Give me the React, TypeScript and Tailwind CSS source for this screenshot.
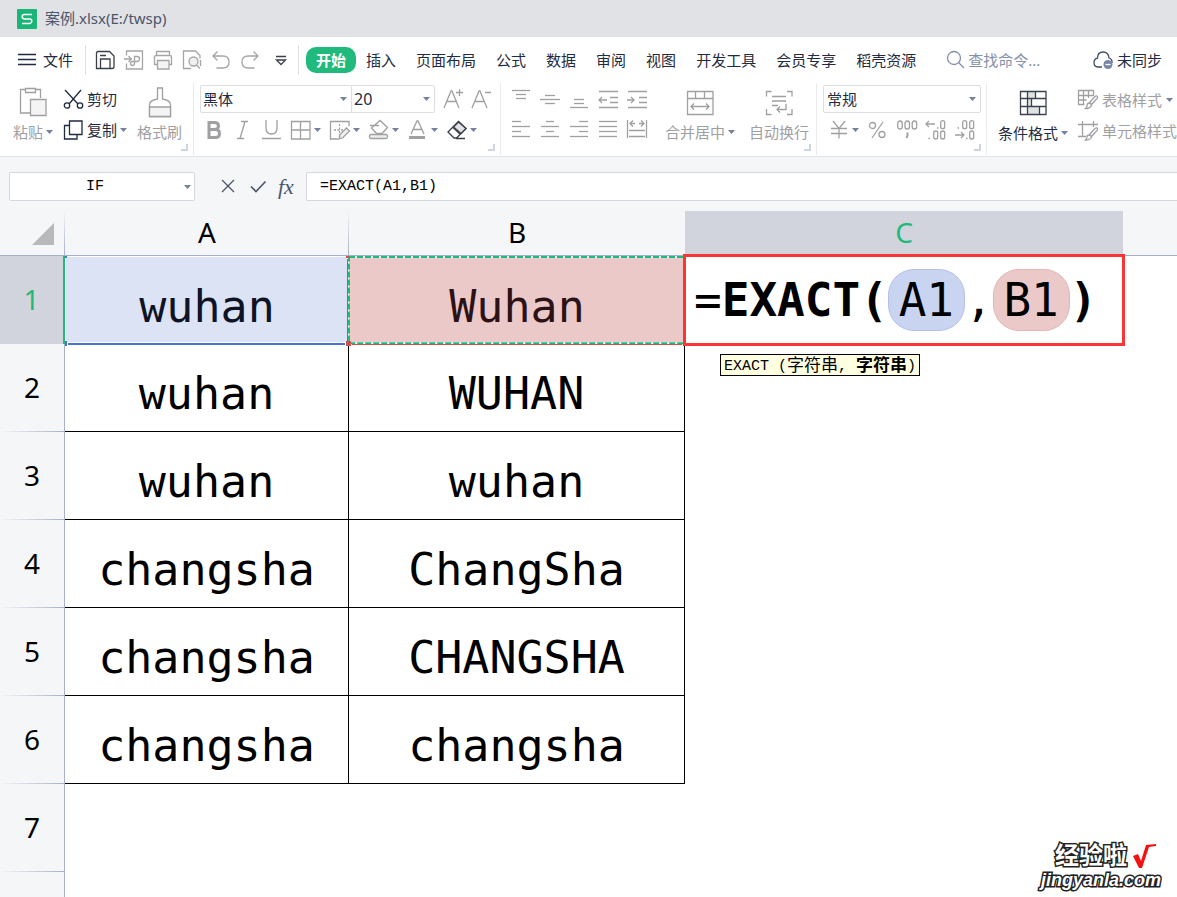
import React from "react";
import clsx from "clsx";

type IconProps = {
  w?: number;
  h?: number;
  className?: string;
  children: React.ReactNode;
};

const Icon = ({ w = 20, h = 20, className, children }: IconProps) => (
  <svg
    width={w}
    height={h}
    viewBox={`0 0 ${w} ${h}`}
    fill="none"
    stroke="currentColor"
    strokeWidth="1.3"
    className={clsx("shrink-0 overflow-visible", className)}
    aria-hidden="true"
  >
    {children}
  </svg>
);

const Caret = ({ className }: { className?: string }) => (
  <svg
    width="7"
    height="4"
    viewBox="0 0 7 4"
    className={clsx("shrink-0 fill-[#74819c]", className)}
    aria-hidden="true"
  >
    <path d="M0 0h7L3.5 4z" />
  </svg>
);

const Corner = () => (
  <svg
    width="7"
    height="7"
    viewBox="0 0 7 7"
    className="absolute right-[5px] bottom-1"
    aria-hidden="true"
  >
    <path d="M6 0v6H0" fill="none" stroke="#cdd4e2" strokeWidth="2" />
  </svg>
);

type ToolProps = {
  label: string;
  caret?: boolean;
  className?: string;
  children: React.ReactNode;
};

const Tool = ({ label, caret, className, children }: ToolProps) => (
  <button
    type="button"
    aria-label={label}
    className={clsx("flex shrink-0 items-center gap-[3px]", className)}
  >
    {children}
    {caret && <Caret />}
  </button>
);

// horizontal strokes used by every alignment icon: [x1, x2, y]
const Lines = ({ rows }: { rows: number[][] }) => (
  <Icon>
    {rows.map(([a, b, y]) => (
      <path key={y} d={`M${a} ${y}.5H${b}`} />
    ))}
  </Icon>
);

const topAlign = [
  { label: "顶端对齐", rows: [[1, 19, 0], [5, 15, 4], [5, 15, 8]] },
  { label: "垂直居中", rows: [[5, 15, 5], [0, 20, 9], [5, 15, 13]] },
  { label: "底端对齐", rows: [[5, 15, 9], [5, 15, 13], [1, 19, 17]] },
];

const bottomAlign = [
  { label: "左对齐", rows: [[1, 10, 2], [1, 19, 7], [1, 10, 12], [1, 19, 17]] },
  { label: "水平居中", rows: [[6, 14, 2], [1, 19, 7], [6, 14, 12], [1, 19, 17]] },
  { label: "右对齐", rows: [[10, 19, 2], [1, 19, 7], [10, 19, 12], [1, 19, 17]] },
  { label: "两端对齐", rows: [[1, 19, 2], [1, 19, 7], [1, 19, 12], [1, 19, 17]] },
];

const tabs = [
  "插入",
  "页面布局",
  "公式",
  "数据",
  "审阅",
  "视图",
  "开发工具",
  "会员专享",
  "稻壳资源",
];

const rows = [
  ["wuhan", "WUHAN"],
  ["wuhan", "wuhan"],
  ["changsha", "ChangSha"],
  ["changsha", "CHANGSHA"],
  ["changsha", "changsha"],
];

const TitleBar = () => (
  <header className="flex h-[37px] shrink-0 items-center gap-2 bg-[#e1e2e6] pl-[17px]">
    <svg width="20" height="20" viewBox="0 0 20 20" aria-hidden="true">
      <rect width="20" height="20" rx="1" fill="#19b677" />
      <path
        d="M15 5.5H7.200Q5.200 5.500 5.200 7.600T7.200 9.900H12.800Q14.800 9.900 14.800 12T12.800 14.500H5"
        fill="none"
        stroke="#fff"
        strokeWidth="1.5"
      />
    </svg>
    <h1 className="text-[15px] text-[#4a556b]">案例.xlsx(E:/twsp)</h1>
  </header>
);

const MenuBar = () => (
  <nav className="flex h-[46px] shrink-0 items-center bg-white pr-[15px] pl-[18px] text-[15px] whitespace-nowrap text-[#1f2b40]">
    <button type="button" className="flex items-center gap-[7px]">
      <Icon w={18} h={14}>
        <path d="M0 1.500h18M0 6.500h18M0 11.500h18" />
      </Icon>
      文件
    </button>
    <div className="ml-3 flex items-center gap-[9px] border-l border-[#dfe1e6] py-[5px] pl-[9px] text-[#a5a5a5]">
      <Tool label="保存" className="text-[#3a3f49]">
        <Icon>
          <path d="M3 1.500h11.500l4.500 4.500v10.500q0 2-2 2H1.500V3q0-1.500 1.500-1.500z" />
          <path d="M5.500 18.500v-9.500h9.500v9.500M5 5.500h6" />
        </Icon>
      </Tool>
      <Tool label="输出为PDF">
        <Icon>
          <path d="M2.500 5.500v-4.500h16v18h-16v-5.500M0 9h7M4.500 6l3 3-3 3" />
          <path d="M10.500 13V6.500h2.500q2.500 0 2.500 2.500t-2.500 2.500H8.500q-2 0-2 2t2 2 2-2.500" />
        </Icon>
      </Tool>
      <Tool label="打印">
        <Icon>
          <path d="M3.500 5V1.500h13V5M4 14.500H1.500V7q0-1.500 1.500-1.500h14q1.500 0 1.500 1.500v7.500H16" />
          <path d="M4.500 10.500h11.500v8.500H4.500z" fill="#f4f4f4" />
        </Icon>
      </Tool>
      <Tool label="打印预览">
        <Icon>
          <path d="M9 18.500H1.500v-17.500h12l4.500 4.500v3" />
          <circle cx="11.500" cy="11.500" r="4.500" fill="#f0f0f0" />
          <path d="M14.500 15l3.500 3.500M18.500 10v6" />
        </Icon>
      </Tool>
      <Tool label="撤销">
        <Icon>
          <path d="M6.500 1.500L2 6l4.500 4.500M2.500 6H12q6 0 6 6t-6 6H5.500" />
        </Icon>
      </Tool>
      <Tool label="恢复">
        <Icon>
          <path d="M13.500 1.500L18 6l-4.500 4.500M17.500 6H8q-6 0-6 6t6 6h6.500" />
        </Icon>
      </Tool>
      <Tool label="自定义快速访问" className="text-[#3a3f49]">
        <Icon>
          <path d="M7 6.500h10M7.500 10h9L12 14.500z" />
        </Icon>
      </Tool>
    </div>
    <div className="ml-[9px] flex items-center gap-5 border-l border-[#dfe1e6] py-[2px] pl-[7px]">
      <button
        type="button"
        className="-mr-[10px] h-[26px] rounded-[10px] bg-[#20ba7c] px-[10px] font-bold text-white"
      >
        开始
      </button>
      {tabs.map((tab) => (
        <button type="button" key={tab}>
          {tab}
        </button>
      ))}
    </div>
    <label className="ml-[30px] flex items-center gap-[2px] text-[#8490a8]">
      <Icon>
        <circle cx="8" cy="8" r="6.500" />
        <path d="M12.500 12.500l5.500 5.500" />
      </Icon>
      <input
        aria-label="查找命令"
        placeholder="查找命令..."
        className="w-24 text-[15px] outline-none placeholder:text-[#8490a8]"
      />
    </label>
    <button type="button" className="ml-auto flex items-center gap-1">
      <Icon className="text-[#3f4b63]">
        <path d="M9 17H5Q1 16.500 1 12.700t3.500-4.500Q4.500 2 10 2t6 6q3.500 1 3 5" />
        <circle cx="15" cy="14.500" r="4.500" fill="#7686a6" stroke="none" />
        <path d="M12.500 14.500h5" stroke="#fff" />
      </Icon>
      未同步
    </button>
  </nav>
);

const ribbonGroup = "relative flex h-[72px] shrink-0 border-r border-[#eaebee]";
const bigTool = "flex flex-col items-center justify-between pt-1 pb-[13px]";

const Ribbon = () => (
  <section className="flex h-[74px] shrink-0 overflow-hidden border-b border-[#e3e4e7] bg-white text-[15px] whitespace-nowrap text-[#a0a0a3]">
    <div className={clsx(ribbonGroup, "w-[194px] gap-[10px] pl-[13px]")}>
      <button type="button" className={bigTool}>
        <Icon w={28} h={30}>
          <path d="M6.500 2.500H1.500v23.500H11M16.500 2.500h5V11M6.500 1.500h10v4h-10z" />
          <path d="M11.500 12.500h15.500v16H11.500z" fill="#f4f4f4" />
        </Icon>
        <span className="flex h-5 items-center gap-[3px]">
          粘贴
          <Caret />
        </span>
      </button>
      <div className="flex flex-col gap-[5px] pt-[3px] text-[#1f2b40]">
        <button type="button" className="flex h-[26px] items-center gap-[3px]">
          <Icon w={21}>
            <path d="M2 1l13 14M18 1L6 15" />
            <circle cx="4" cy="16.500" r="2.700" />
            <circle cx="17" cy="16.500" r="2.700" />
          </Icon>
          剪切
        </button>
        <button type="button" className="flex h-[26px] items-center gap-[3px]">
          <Icon w={21}>
            <path d="M6 5.500H1.500v13.500H14V14.500" />
            <path d="M6.500 1h12.500v13.500H6.500z" />
          </Icon>
          复制
          <Caret />
        </button>
      </div>
      <button type="button" className={bigTool}>
        <Icon w={24} h={30}>
          <path d="M9.500 12V1h5v11q8 1.500 8 5.500V29.500h-21V17.500Q1.500 13.500 9.500 12z" />
          <path d="M1.500 20h21v9.500h-21z" fill="#f4f4f4" />
        </Icon>
        <span className="h-5 leading-5">格式刷</span>
      </button>
      <Corner />
    </div>

    <div className={clsx(ribbonGroup, "w-[307px] flex-col gap-[3px] pt-[2px] pl-[6px]")}>
      <div className="flex items-center gap-2">
        <div className="flex h-[28px] rounded-xs border border-[#dcdee3] text-[#1f2b40]">
          <div className="relative flex w-[151px] items-center border-r border-[#dcdee3]">
            <select aria-label="字体" className="w-full appearance-none pl-[2px]">
              <option>黑体</option>
            </select>
            <Caret className="absolute right-1" />
          </div>
          <div className="relative flex w-[82px] items-center">
            <select aria-label="字号" className="w-full appearance-none pl-[2px] text-base">
              <option>20</option>
            </select>
            <Caret className="absolute right-1" />
          </div>
        </div>
        <Tool label="增大字号">
          <Icon>
            <path d="M1 19L8 2h1l7 17M4 12.500h9M13 3.500h7M16.500 0v7" />
          </Icon>
        </Tool>
        <Tool label="减小字号">
          <Icon>
            <path d="M1 19L8 2h1l7 17M4 12.500h9M14 3.500h6" />
          </Icon>
        </Tool>
      </div>
      <div className="flex h-7 items-center gap-[9px] pl-1">
        <Tool label="加粗">
          <Icon>
            <path d="M5 2.500h5.500q4 0 4 3.500t-4 3.500H5zM5 9.500h6.500q4 0 4 4t-4 4H5z" strokeWidth="3" />
          </Icon>
        </Tool>
        <Tool label="倾斜">
          <Icon>
            <path d="M8 1.500h7M4 18.500h7M12 1.500L7 18.500" />
          </Icon>
        </Tool>
        <Tool label="下划线">
          <Icon>
            <path d="M4 0v8q0 6 5.500 6t5.500-6V0M0 18.500h19" />
          </Icon>
        </Tool>
        <Tool label="边框" caret>
          <Icon>
            <path d="M0.500 1.500h18.500v17.500H.500zM9.500 1.500v17.500M.500 10h18.500" />
          </Icon>
        </Tool>
        <Tool label="绘图边框" caret>
          <Icon>
            <path d="M19 6V1.500H.500v17.500H8" />
            <path d="M9.500 4v12M4 10h11" strokeDasharray="2 1.500" />
            <path d="M9 19l1-4.500 6.500-6.500 3 3-6.500 6.500z" fill="#f0f0f0" />
          </Icon>
        </Tool>
        <Tool label="填充颜色" caret>
          <Icon>
            <path d="M2.500 8L11 .500 18.500 7.500 13 13.500H7.500L2.500 8zM1 5.500h9" />
            <rect x="0.500" y="14.500" width="18" height="4" rx="1.500" fill="#eee" />
          </Icon>
        </Tool>
        <Tool label="字体颜色" caret>
          <Icon>
            <path d="M3 14L9 1h1l6 13M5.500 9.500h8.500" />
            <path d="M1 17.500h16" strokeWidth="3" />
          </Icon>
        </Tool>
        <Tool label="清除" caret className="text-[#3a3f49]">
          <Icon>
            <path d="M1 12L11.500 1.500 19 8.500 9.500 18H7zM6 7.500l7.500 7M9 18.500h9" />
            <path d="M6.500 7l5-5 7.500 6.500-5 5z" fill="#dfe1e5" />
          </Icon>
        </Tool>
      </div>
      <Corner />
    </div>

    <div className={clsx(ribbonGroup, "w-[316px] gap-[18px] pl-[10px]")}>
      <div className="flex flex-col gap-[9px] pt-[7px]">
        <div className="flex gap-[9px]">
          {topAlign.map((t) => (
            <Tool key={t.label} label={t.label}>
              <Lines rows={t.rows} />
            </Tool>
          ))}
          <Tool label="减少缩进">
            <Icon>
              <path d="M1 1.500h19M12 7.500h8M12 12.500h8M1 17.500h19M1 10h8M4 7l-3 3 3 3" />
            </Icon>
          </Tool>
          <Tool label="增加缩进">
            <Icon>
              <path d="M1 1.500h19M12 7.500h8M12 12.500h8M1 17.500h19M0 10h7M4 7l3 3-3 3" />
            </Icon>
          </Tool>
        </div>
        <div className="flex gap-[9px]">
          {bottomAlign.map((t) => (
            <Tool key={t.label} label={t.label}>
              <Lines rows={t.rows} />
            </Tool>
          ))}
          <Tool label="分散对齐">
            <Icon>
              <path d="M.500 1v18M19.500 1v18M3 4.500h5M12 4.500h5M6 1.500L3 4.500l3 3M14 1.500l3 3-3 3M2 11.500h16M2 17.500h16" />
            </Icon>
          </Tool>
        </div>
      </div>
      <button type="button" className={bigTool}>
        <Icon w={28} h={30}>
          <path d="M1.500 4.500h25.500v23H1.500zM1.500 11.500H27M9.500 4.500v7M18.500 4.500v7M5 19.500h18M8 16.500l-3 3 3 3M20 16.500l3 3-3 3" />
        </Icon>
        <span className="flex h-5 items-center gap-[3px]">
          合并居中
          <Caret />
        </span>
      </button>
      <button type="button" className={clsx(bigTool, "-ml-1")}>
        <Icon w={28} h={30}>
          <path d="M6.500 4.500h-5v5M22 4.500h5v5M1.500 22v5.500h5M27 22v5.500h-5M7 9.500h14M7 14h14M7 18.500h6M21 17v5.500H12M15 19.500l-3 3 3 3" />
        </Icon>
        <span className="h-5 leading-5">自动换行</span>
      </button>
      <Corner />
    </div>

    <div className={clsx(ribbonGroup, "w-[170px] flex-col gap-[3px] pt-[2px] pl-[6px]")}>
      <div className="relative flex h-[28px] w-[158px] items-center rounded-xs border border-[#dcdee3] text-[#1f2b40]">
        <select aria-label="数字格式" className="w-full appearance-none pl-[3px]">
          <option>常规</option>
        </select>
        <Caret className="absolute right-1" />
      </div>
      <div className="flex h-7 items-center gap-[9px] pl-[6px]">
        <Tool label="货币" caret>
          <Icon>
            <path d="M4 1l6 7.500 6-7.500M10 8.500v10M2 8.500h16M2 13.500h16" />
          </Icon>
        </Tool>
        <Tool label="百分比">
          <Icon>
            <path d="M15 2L4 18" />
            <circle cx="4.500" cy="5.500" r="3" />
            <circle cx="14" cy="14.500" r="3" />
          </Icon>
        </Tool>
        <Tool label="千位分隔">
          <Icon>
            <rect x="0.700" y="1" width="4.500" height="8" rx="2.200" />
            <rect x="8" y="1" width="4.500" height="8" rx="2.200" />
            <rect x="15.200" y="1" width="4.500" height="8" rx="2.200" />
            <path d="M10.500 12.500v3l-1 2.500" strokeWidth="2" />
          </Icon>
        </Tool>
        <Tool label="增加小数位">
          <Icon>
            <path d="M0 4h9M3 1L0 4l3 3M11 8h1.500M2.500 18.500h1.500" />
            <rect x="14.700" y="0.700" width="4" height="8" rx="2" />
            <rect x="7.700" y="11" width="4" height="8" rx="2" />
            <rect x="14.700" y="11" width="4" height="8" rx="2" />
          </Icon>
        </Tool>
        <Tool label="减少小数位">
          <Icon>
            <path d="M0 15h9M6 12l3 3-3 3M11 18.500h1.500M2.500 8h1.500" />
            <rect x="7.700" y="0.700" width="4" height="8" rx="2" />
            <rect x="14.700" y="0.700" width="4" height="8" rx="2" />
            <rect x="14.700" y="11" width="4" height="8" rx="2" />
          </Icon>
        </Tool>
      </div>
      <Corner />
    </div>

    <div className="flex shrink-0 gap-[10px] pl-[11px]">
      <button type="button" className={clsx(bigTool, "text-[#1f2b40]")}>
        <Icon w={28} h={30} className="text-[#3a4252]">
          <path d="M8.500 4.500h8v7h-8zM8.500 11.500h4v8h-4zM8.500 19.500h12v8h-12z" fill="#dfe3e3" stroke="none" />
          <path d="M1.500 4.500H27v23H1.500zM1.500 11.500H27M1.500 19.500H27M8.500 4.500v23M16.500 4.500v7M12.500 11.500v8M20.500 19.500v8" />
        </Icon>
        <span className="flex h-5 items-center gap-[3px]">
          条件格式
          <Caret />
        </span>
      </button>
      <div className="flex flex-col gap-[5px] pt-1">
        <button type="button" className="flex h-[26px] items-center gap-1">
          <Icon>
            <path d="M6.500 14.500H.500v-14h15V6M.500 5.500h15M.500 10h8M5.500.500v14M10.500.500V8" />
            <path d="M19 6q1.500 1-.500 3l-5 5.500-2-2 5-5.500q1.500-1.500 2.500-1zM11 13q2 0 2.500 2.500-2 3.500-6 3 1.500-1 1.500-3t2-2.500z" />
          </Icon>
          表格样式
          <Caret />
        </button>
        <button type="button" className="flex h-[26px] items-center gap-1">
          <Icon>
            <path d="M4.500 0v16M0 3.500h20M15.500 0v6M0 15.500h8" />
            <path d="M19 7q1.500 1-.500 3l-5 5.500-2-2 5-5.500q1.500-1.500 2.500-1zM11 14q2 0 2.500 2.500-2 3-6 2.500 1.500-1 1.500-3t2-2z" />
          </Icon>
          单元格样式
        </button>
      </div>
    </div>
  </section>
);

const FormulaBar = () => (
  <section className="flex shrink-0 items-center bg-[#f5f6f8] pt-[15px] pb-[10px] pl-[9px] font-['Liberation_Mono','Noto_Sans_CJK_SC',monospace] text-[15px] text-black">
    <div className="relative flex h-[29px] w-[186px] items-center rounded-xs border border-[#d5d8df] bg-white">
      <input
        aria-label="名称框"
        defaultValue="IF"
        className="w-full pt-[2px] pr-[14px] text-center outline-none"
      />
      <Caret className="absolute right-[3px]" />
    </div>
    <div className="ml-[23px] flex gap-[10px] pr-3 text-[#4a556b]">
      <Tool label="取消">
        <Icon>
          <path d="M4 3l12 12M16 3L4 15" />
        </Icon>
      </Tool>
      <Tool label="输入">
        <Icon>
          <path d="M3 9.500l5 5L17.500 4.500" strokeWidth="1.600" />
        </Icon>
      </Tool>
      <button
        type="button"
        className="font-['Liberation_Serif',serif] text-[22px] leading-5 italic"
      >
        fx
      </button>
    </div>
    <input
      aria-label="编辑栏"
      defaultValue="=EXACT(A1,B1)"
      className="h-[29px] min-w-0 flex-1 rounded-l-xs border border-r-0 border-[#d5d8df] bg-white px-[13px] outline-none"
    />
  </section>
);

const colHead =
  "h-[45px] border-b border-[#a9b1c9] bg-[#f5f6f8] bg-[linear-gradient(to_bottom,transparent,#a9b1c9)] bg-[length:1px_100%] bg-right bg-no-repeat pb-[2px] font-normal";
const rowHead =
  "h-[88px] border-r border-[#a9b1c9] bg-[#f5f6f8] bg-[linear-gradient(to_right,transparent,#a9b1c9)] bg-[length:100%_1px] bg-bottom bg-no-repeat pb-[2px] font-normal";
const cellText =
  "pt-3 text-center font-['DejaVu_Sans_Mono',monospace] text-[45px] leading-none";
const dataCell = clsx(cellText, "border-r border-b border-black");
const chip =
  "flex h-[62px] w-[77px] items-center justify-center rounded-[26px] border font-normal";

const Sheet = () => (
  <main className="flex-1 bg-white">
    <table className="w-full table-fixed border-separate border-spacing-0 text-[28px] leading-none text-black">
      <colgroup>
        <col className="w-[65px]" />
        <col className="w-[284px]" />
        <col className="w-[336px]" />
        <col className="w-[438px]" />
        <col />
      </colgroup>
      <thead>
        <tr>
          <th className={colHead}>
            <button type="button" aria-label="全选" className="mt-[3px] ml-[22px] block w-fit pl-[10px]">
              <svg width="22" height="22" viewBox="0 0 22 22" aria-hidden="true">
                <path d="M22 0v22H0z" fill="#b9b9b9" />
              </svg>
            </button>
          </th>
          <th className={colHead}>A</th>
          <th className="border-b border-[#a9b1c9] bg-[#f5f6f8] pb-[2px] font-normal">B</th>
          <th className="border-b border-[#a9b1c9] bg-[#d1d4dc] pb-[2px] font-normal text-[#20ba7c]">
            C
          </th>
          <th className="border-b border-[#a9b1c9] bg-[#f5f6f8]" />
        </tr>
      </thead>
      <tbody>
        <tr>
          <th className="h-[88px] border-r-2 border-[#20ba7c] bg-[#d1d4dc] pb-[2px] font-normal text-[#20ba7c]">
            1
          </th>
          <td className={clsx(cellText, "relative bg-[#dce3f5] text-[#0e1426]")}>
            wuhan
            <div className="absolute inset-0 border border-white" />
            <svg className="absolute inset-0 size-full overflow-visible" aria-hidden="true">
              <svg y="100%" className="overflow-visible">
                <rect x="0" y="-2" width="284" height="4" fill="#fff" />
                <rect x="3" y="-1" width="277" height="2" fill="#4a72cf" />
                <rect x="0" y="-3" width="2" height="5" fill="#4a72cf" />
              </svg>
              <rect width="2" height="2" fill="#4a72cf" />
            </svg>
          </td>
          <td className={clsx(cellText, "relative bg-[#ecc9c9] text-[#2c1216]")}>
            Wuhan
            <svg className="absolute inset-0 size-full overflow-visible" aria-hidden="true">
              <rect x="-1" y="1" width="100%" height="98%" fill="none" stroke="#fff" strokeWidth="2" />
              <path d="M-1.500 3V85" stroke="#cc5050" />
              <rect x="0" y="1" width="100%" height="98%" fill="none" stroke="#20ba7c" strokeWidth="2" strokeDasharray="6 2" />
              <svg y="100%" className="overflow-visible">
                <path d="M3 .5H333" stroke="#cc5050" />
                <rect x="-3" y="-3" width="5" height="5" fill="#cc5050" />
              </svg>
              <path d="M-3 1h3" stroke="#cc5050" strokeWidth="2" />
            </svg>
          </td>
          <td className="relative">
            <div className="absolute -inset-x-[2px] -inset-y-[2px] flex items-center border-3 border-[#fb3535] bg-white pl-2 font-['DejaVu_Sans_Mono',monospace] text-[46px] leading-none font-bold whitespace-nowrap">
              <span className="font-normal">=</span>
              <span>EXACT(</span>
              <span className={clsx(chip, "border-[#b3c1e8] bg-[#c9d4f0]")}>A1</span>
              <span className="font-normal">,</span>
              <span className={clsx(chip, "border-[#e4b5b5] bg-[#ecc9c9]")}>B1</span>
              <span>)</span>
            </div>
            <div
              role="tooltip"
              className="absolute top-full left-[35px] mt-[10px] flex h-[22px] items-center border border-black bg-[#ffffe1] px-[3px] pt-[2px] font-['Liberation_Mono','Noto_Sans_CJK_SC',monospace] text-[15px] leading-none whitespace-pre"
            >
              EXACT (<span className="text-[17px]">字符串</span>, <b className="text-[17px]">字符串</b>)
            </div>
          </td>
          <td />
        </tr>
        {rows.map(([a, b], i) => (
          <tr key={i}>
            <th className={rowHead}>{i + 2}</th>
            <td className={dataCell}>{a}</td>
            <td className={dataCell}>{b}</td>
            <td />
            <td />
          </tr>
        ))}
        <tr>
          <th className={rowHead}>7</th>
          <td colSpan={4} />
        </tr>
        <tr>
          <th className="h-[25px] border-r border-[#a9b1c9] bg-[#f5f6f8]" />
          <td colSpan={4} />
        </tr>
      </tbody>
    </table>
  </main>
);

const Watermark = () => (
  <aside className="absolute right-4 bottom-[6px] flex flex-col items-end font-['Liberation_Sans','Noto_Sans_CJK_SC',sans-serif] font-bold text-white [paint-order:stroke_fill] [-webkit-text-stroke:3px_#222]">
    <div className="flex items-center gap-1 pr-1 text-[24px] leading-6">
      <span>经验啦</span>
      <svg width="26" height="26" viewBox="0 0 26 26" aria-hidden="true">
        <path d="M2 13l5-2 3 7L15 2l10-1v2l-7 1-7 21H8z" fill="#f51111" />
      </svg>
    </div>
    <span className="text-[18px] leading-[22px] italic">jingyanla.com</span>
  </aside>
);

const App = () => {
  return (
    <div className="relative flex min-h-screen flex-col overflow-hidden bg-white font-['Noto_Sans','Noto_Sans_CJK_SC',sans-serif]">
      <TitleBar />
      <MenuBar />
      <Ribbon />
      <FormulaBar />
      <Sheet />
      <Watermark />
    </div>
  );
};

export default App;
